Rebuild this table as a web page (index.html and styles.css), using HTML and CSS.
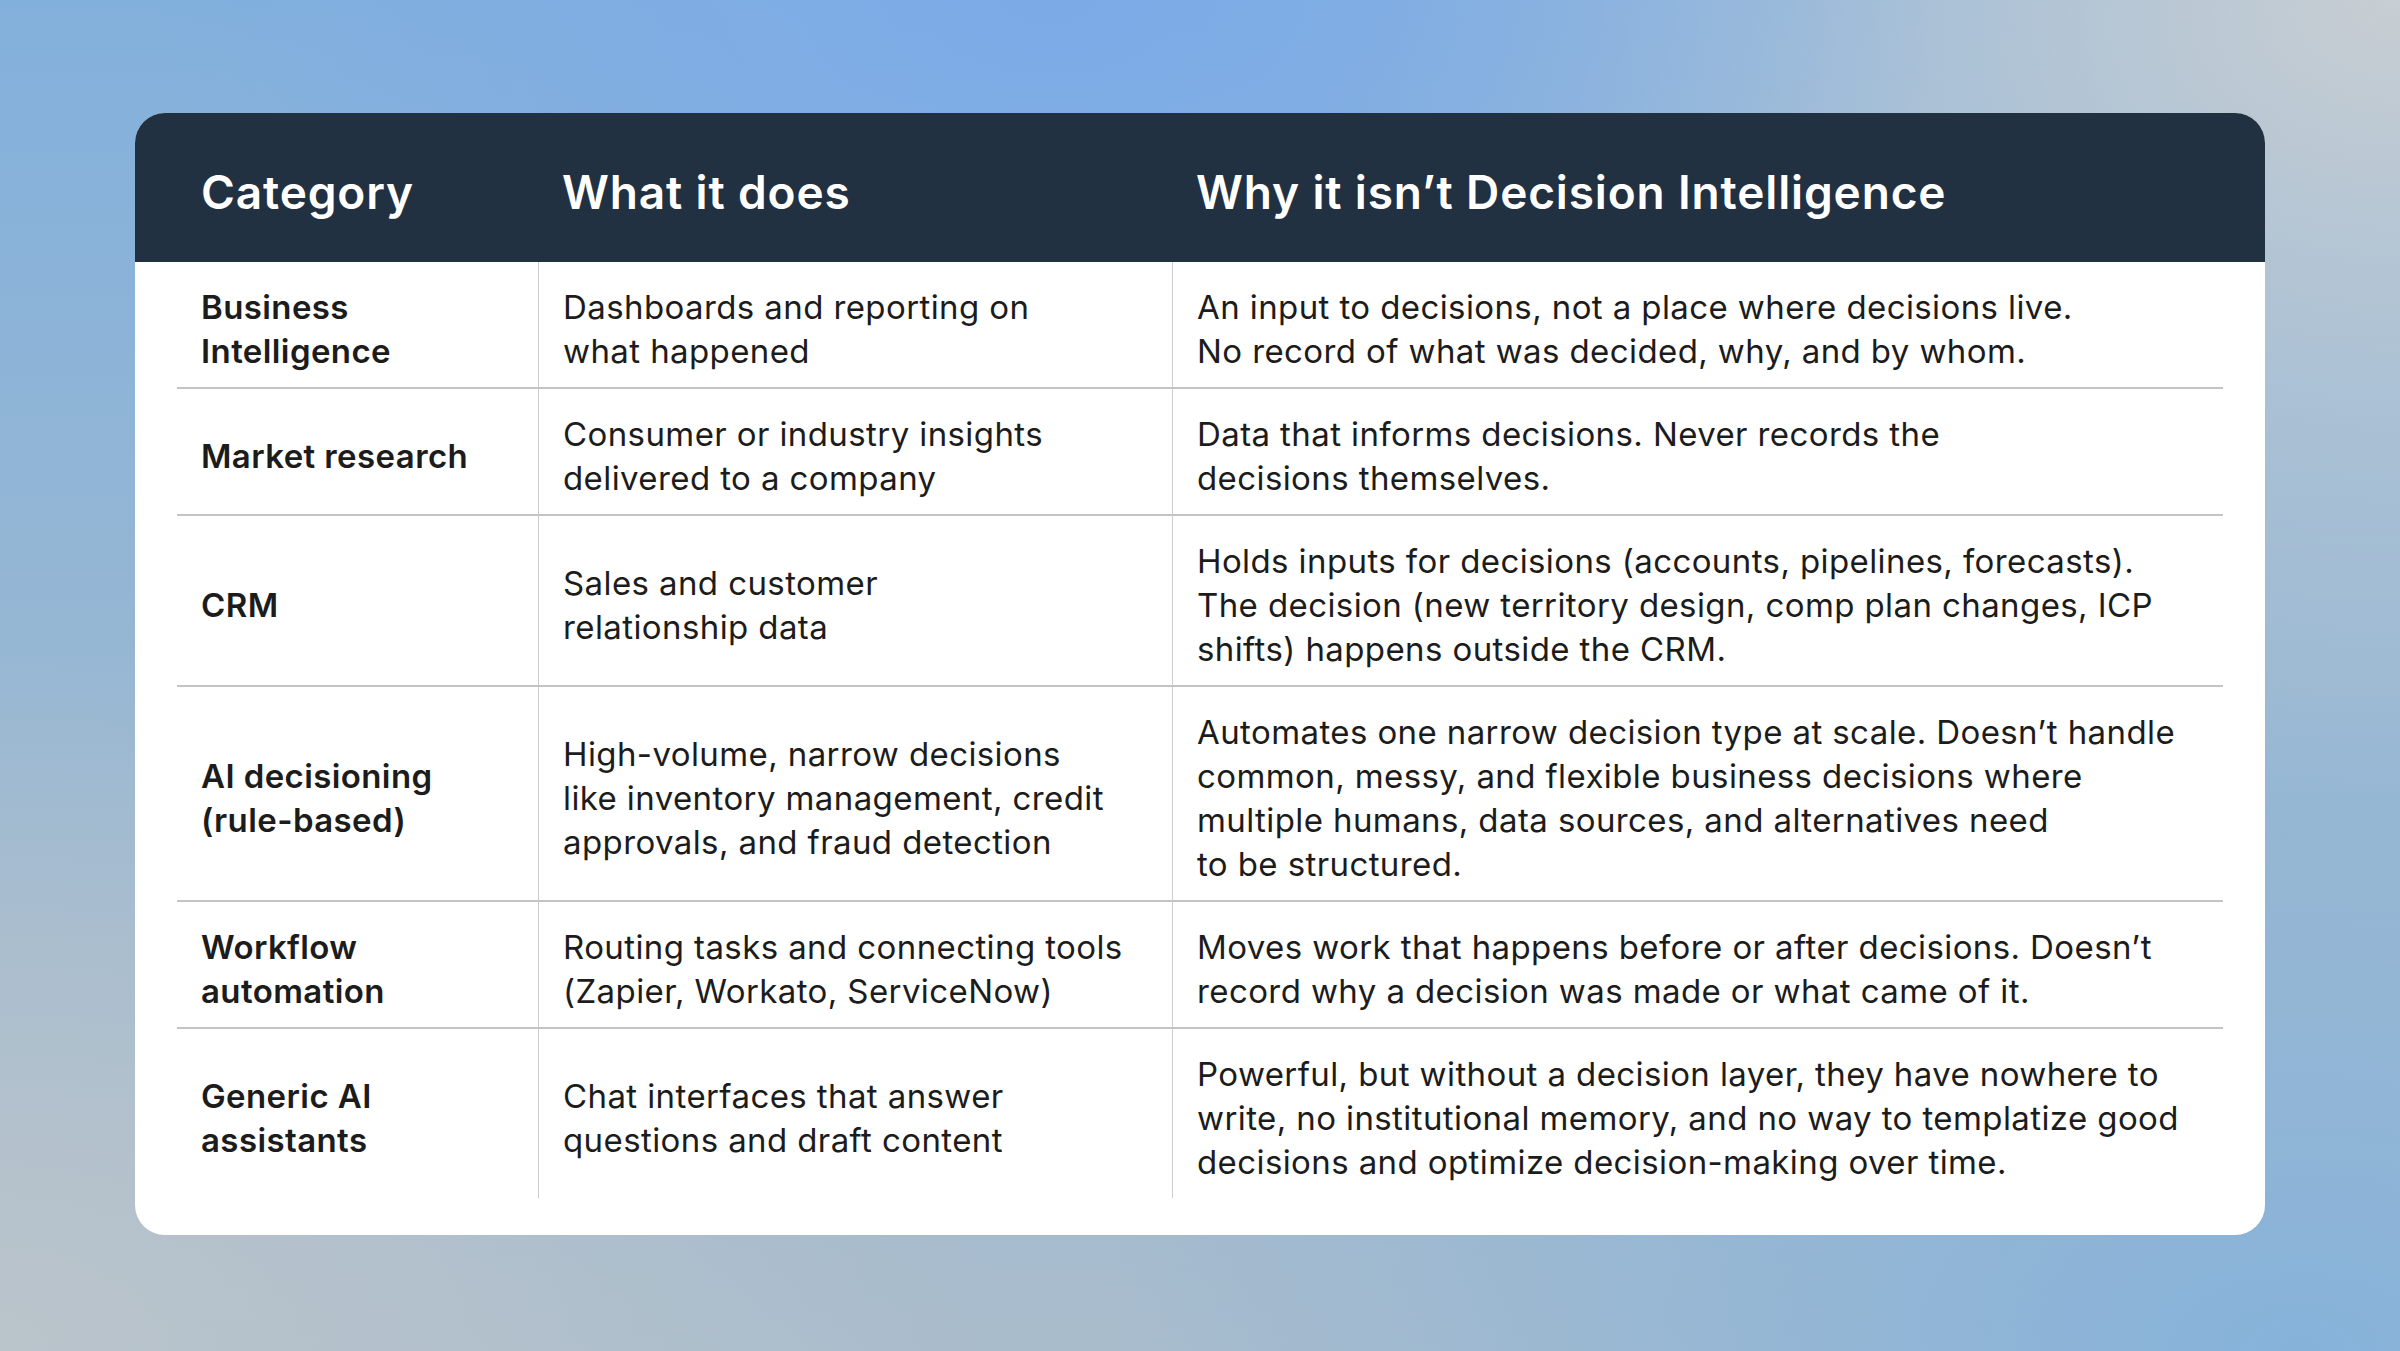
FILE: index.html
```html
<!DOCTYPE html>
<html lang="en">
<head>
<meta charset="utf-8">
<title>Decision Intelligence comparison</title>
<link rel="stylesheet" href="styles.css">
</head>
<body>
<div class="stage">
  <div class="card">
    <div class="head">
      <div class="hcell">Category</div>
      <div class="hcell">What it does</div>
      <div class="hcell">Why it isn’t Decision Intelligence</div>
    </div>
    <div class="rows">
      <div class="row">
        <div class="cell label">Business<br>Intelligence</div>
        <div class="cell">Dashboards and reporting on<br>what happened</div>
        <div class="cell">An input to decisions, not a place where decisions live.<br>No record of what was decided, why, and by whom.</div>
      </div>
      <div class="row mid">
        <div class="cell label">Market research</div>
        <div class="cell">Consumer or industry insights<br>delivered to a company</div>
        <div class="cell">Data that informs decisions. Never records the<br>decisions themselves.</div>
      </div>
      <div class="row mid">
        <div class="cell label">CRM</div>
        <div class="cell">Sales and customer<br>relationship data</div>
        <div class="cell">Holds inputs for decisions (accounts, pipelines, forecasts).<br>The decision (new territory design, comp plan changes, ICP<br>shifts) happens outside the CRM.</div>
      </div>
      <div class="row mid">
        <div class="cell label">AI decisioning<br>(rule-based)</div>
        <div class="cell">High-volume, narrow decisions<br>like inventory management, credit<br>approvals, and fraud detection</div>
        <div class="cell">Automates one narrow decision type at scale. Doesn’t handle<br>common, messy, and flexible business decisions where<br>multiple humans, data sources, and alternatives need<br>to be structured.</div>
      </div>
      <div class="row">
        <div class="cell label">Workflow<br>automation</div>
        <div class="cell">Routing tasks and connecting tools<br>(Zapier, Workato, ServiceNow)</div>
        <div class="cell">Moves work that happens before or after decisions. Doesn’t<br>record why a decision was made or what came of it.</div>
      </div>
      <div class="row mid">
        <div class="cell label">Generic AI<br>assistants</div>
        <div class="cell">Chat interfaces that answer<br>questions and draft content</div>
        <div class="cell">Powerful, but without a decision layer, they have nowhere to<br>write, no institutional memory, and no way to templatize good<br>decisions and optimize decision-making over time.</div>
      </div>
    </div>
  </div>
</div>
</body>
</html>
```

FILE: styles.css
```css
html, body {
  margin: 0;
  padding: 0;
}
body {
  width: 2400px;
  height: 1351px;
  overflow: hidden;
  font-family: Inter, "Noto Sans", "Liberation Sans", sans-serif;
  background:
    radial-gradient(ellipse 900px 500px at 1050px 0px, rgba(124, 170, 232, 0.95), rgba(124, 170, 232, 0) 100%),
    radial-gradient(ellipse 1100px 800px at 2400px 0px, rgba(200, 206, 210, 1), rgba(200, 206, 210, 0) 100%),
    radial-gradient(ellipse 1000px 700px at 0px 1351px, rgba(186, 196, 203, 1), rgba(186, 196, 203, 0) 100%),
    radial-gradient(ellipse 1200px 700px at 2300px 1351px, rgba(134, 178, 218, 1), rgba(134, 178, 218, 0) 100%),
    linear-gradient(180deg, #82b0dc 0%, #97b7d3 50%, #a9bccc 100%);
}
.stage {
  padding: 113px 0 0 135px;
}
.card {
  width: 2130px;
  height: 1122px;
  box-sizing: border-box;
  background: #ffffff;
  border-radius: 30px;
  overflow: hidden;
}
.head {
  height: 149px;
  box-sizing: border-box;
  background: #223142;
  padding: 51px 42px 0 42px;
  display: grid;
  grid-template-columns: 361px 634px 1fr;
}
.hcell {
  color: #ffffff;
  font-size: 46px;
  font-weight: 600;
  line-height: 56px;
  letter-spacing: 0.85px;
  padding-left: 24px;
}
.rows {
  padding: 0 42px;
}
.row {
  display: grid;
  grid-template-columns: 361px 634px 1fr;
}
.row + .row {
  border-top: 2px solid #c4c4c4;
}
.cell {
  font-size: 33px;
  line-height: 44px;
  color: #1c1c1c;
  letter-spacing: 0.4px;
  white-space: nowrap;
  padding: 23px 24px 14px 24px;
  display: flex;
  flex-direction: column;
  justify-content: center;
}
.cell + .cell {
  border-left: 1px solid #cdcdcd;
}
.label {
  font-weight: 600;
}
```
